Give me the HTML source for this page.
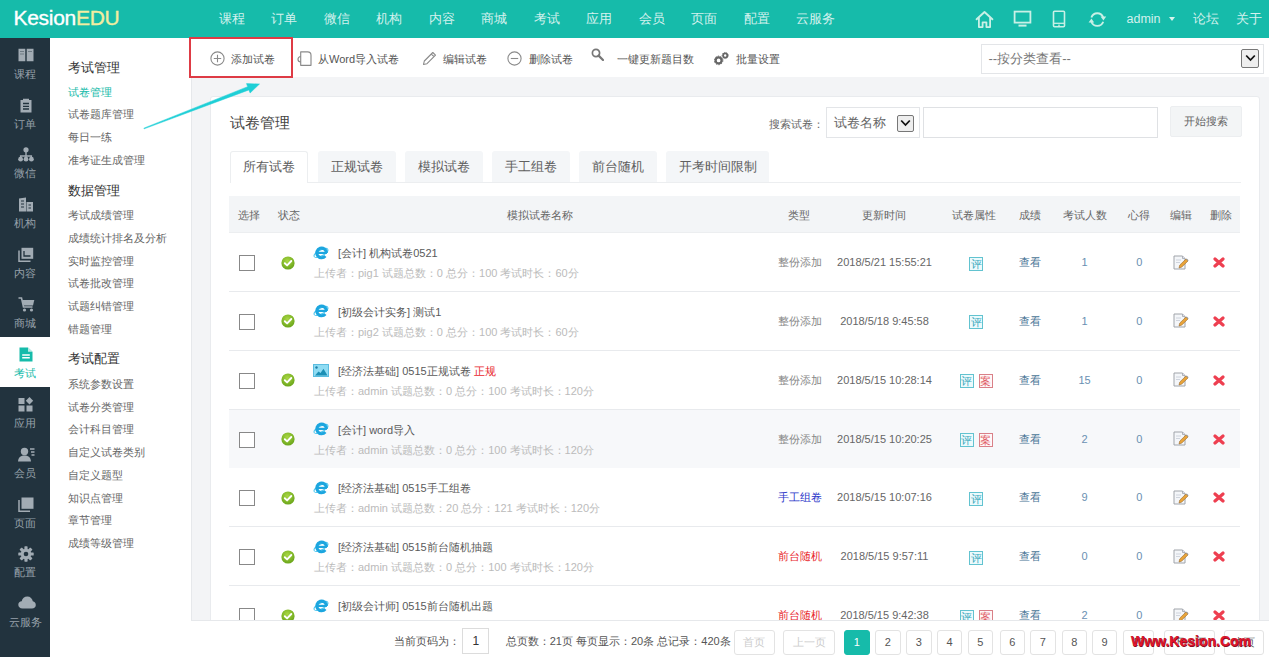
<!DOCTYPE html>
<html><head><meta charset="utf-8">
<style>
*{box-sizing:border-box;margin:0;padding:0}
html,body{width:1269px;height:657px;overflow:hidden}
body{position:relative;background:#f3f4f6;font-family:"Liberation Sans",sans-serif;color:#555}
.a{position:absolute;white-space:nowrap}
#top{left:0;top:0;width:1269px;height:38px;background:#16bbaa}
#logo{left:13.5px;top:3.5px;font-size:21px;line-height:28px;color:#fff;letter-spacing:-0.3px;-webkit-text-stroke:0.35px currentColor}
#logo span{color:#f3eda0}
.nav{top:10px;font-size:13px;line-height:18px;color:rgba(255,255,255,.82)}
#side{left:0;top:38px;width:50px;height:619px;background:#22333e}
.si{position:absolute;left:0;width:50px;height:50px}
.si svg{position:absolute;left:18px;top:10px}
.si b{position:absolute;left:0;width:50px;top:29px;text-align:center;font-weight:normal;font-size:11px;line-height:14px;color:#97a1aa}
.si.on{background:#fff}
.si.on b{color:#16bbaa}
#menu{left:50px;top:38px;width:142px;height:619px;background:#fff;border-right:1px solid #e6e8eb}
.mh{left:18px;font-size:13px;line-height:16px;color:#333}
.mi{left:18px;font-size:11px;line-height:14px;color:#666}
#tool{left:191px;top:38px;width:1078px;height:39px;background:#fff}
.tt{top:13.5px;font-size:11px;line-height:14px;color:#555}
#card{left:210px;top:96px;width:1050px;height:540px;background:#fff;border:1px solid #e9ebee;border-radius:3px}
.tab{position:absolute;top:54px;height:31px;background:#f4f6f8;font-size:13px;line-height:31px;text-align:center;color:#606060;border-radius:3px 3px 0 0}
.tab.on{background:#fff;border:1px solid #eceef0;border-bottom:none;height:32px;line-height:30px}
.th{top:208px;font-size:11px;line-height:14px;color:#666}
.row{position:absolute;left:229px;width:1011px;height:59px;border-bottom:1px solid #e8eaed}
.cb{position:absolute;left:10px;top:22px;width:16px;height:16px;border:1px solid #888;background:#fff}
.ok{position:absolute;left:51.5px;top:22.5px;width:14px;height:14px}
.ie{position:absolute;left:84px;top:12px}
.t1{position:absolute;left:109px;top:13px;font-size:11px;line-height:14px;color:#5a5a5a;white-space:nowrap}
.t2{position:absolute;left:85px;top:33px;font-size:11px;line-height:14px;color:#bbbbbb;white-space:nowrap}
.c{position:absolute;top:22px;font-size:11px;line-height:14px;text-align:center;white-space:nowrap}
#pager{left:191px;top:620px;width:1078px;height:37px;background:#fff;border-top:1px solid #e6e8eb}
.pb{position:absolute;top:9px;height:25px;border:1px solid #e3e3e3;border-radius:3px;font-size:11px;line-height:23px;text-align:center;color:#555;background:#fff}
</style></head><body>

<div id="top" class="a">
<div id="logo" class="a">Kesion<span>EDU</span></div>
<div class="a nav" style="left:218.9px">课程</div>
<div class="a nav" style="left:271.4px">订单</div>
<div class="a nav" style="left:323.9px">微信</div>
<div class="a nav" style="left:376.4px">机构</div>
<div class="a nav" style="left:428.9px">内容</div>
<div class="a nav" style="left:481.4px">商城</div>
<div class="a nav on" style="left:533.9px">考试</div>
<div class="a nav" style="left:586.4px">应用</div>
<div class="a nav" style="left:638.9px">会员</div>
<div class="a nav" style="left:691.4px">页面</div>
<div class="a nav" style="left:743.9px">配置</div>
<div class="a nav" style="left:796.4px">云服务</div>
<svg class="a" style="left:975px;top:10px" width="19" height="19" viewBox="0 0 19 19"><path d="M1.6 9.3 L9.5 2 L17.4 9.3" fill="none" stroke="#c9f0e6" stroke-width="1.9" stroke-linejoin="round" stroke-linecap="round"/><path d="M3.9 7.6 V17.1 H7.6 V12.3 H11.4 V17.1 H15.1 V7.6" fill="none" stroke="#c9f0e6" stroke-width="1.8" stroke-linejoin="round"/></svg>
<svg class="a" style="left:1013px;top:10px" width="19" height="18" viewBox="0 0 19 18"><rect x="1.6" y="1.6" width="15.8" height="11" fill="none" stroke="#c9f0e6" stroke-width="1.8"/><path d="M5.5 15.6 H13.5" stroke="#c9f0e6" stroke-width="2"/></svg>
<svg class="a" style="left:1052px;top:10px" width="14" height="18" viewBox="0 0 14 18"><rect x="1.5" y="1.2" width="11" height="15.6" rx="1" fill="none" stroke="#c9f0e6" stroke-width="1.6"/><path d="M1.5 13.3 H12.5" stroke="#c9f0e6" stroke-width="1.3"/><path d="M6 15.2 H8" stroke="#c9f0e6" stroke-width="1"/></svg>
<svg class="a" style="left:1086px;top:11px" width="23" height="18" viewBox="0 0 23 18"><path d="M5.38 6.45 A6.3 6.3 0 0 1 17.22 6.45" fill="none" stroke="#c9f0e6" stroke-width="1.9"/><path d="M17.22 10.75 A6.3 6.3 0 0 1 5.38 10.75" fill="none" stroke="#c9f0e6" stroke-width="1.9"/><path d="M14.6 5.6 L20.2 5.6 L17.4 9.6 Z" fill="#c9f0e6"/><path d="M2.6 11.6 L8.2 11.6 L5.4 7.6 Z" fill="#c9f0e6"/></svg>
<div class="a nav" style="left:1126.5px;top:10px;font-size:12.5px">admin</div>
<div class="a" style="left:1169px;top:17px;width:0;height:0;border-left:3.5px solid transparent;border-right:3.5px solid transparent;border-top:4px solid #d7f3ec"></div>
<div class="a nav" style="left:1193px">论坛</div>
<div class="a nav" style="left:1236px">关于</div>
</div>
<div id="side" class="a">
<div class="si" style="top:-0.30px"><svg width="16" height="14" viewBox="0 0 16 14"><path d="M0.5 0.8 H7.3 V13.2 H0.5 Z M8.7 0.8 H15.5 V13.2 H8.7 Z" fill="#a2acb4"/><path d="M2 3.5 H6 M2 6 H6 M10 3.5 H14" stroke="#22333e" stroke-width="0.8" opacity=".5"/></svg><b>课程</b></div>
<div class="si" style="top:49.57px"><svg width="16" height="15" viewBox="0 0 16 15"><path d="M2.5 2 H5 V0.8 H11 V2 H13.5 V14.5 H2.5 Z" fill="#a2acb4"/><path d="M5 5.5 H11 M5 8.3 H11 M5 11 H11" stroke="#22333e" stroke-width="1.3"/></svg><b>订单</b></div>
<div class="si" style="top:99.44px"><svg width="16" height="15" viewBox="0 0 16 15"><circle cx="8" cy="2.8" r="2.6" fill="#a2acb4"/><circle cx="2.6" cy="12.2" r="2.4" fill="#a2acb4"/><circle cx="8" cy="12.2" r="2.4" fill="#a2acb4"/><circle cx="13.4" cy="12.2" r="2.4" fill="#a2acb4"/><path d="M8 5 V12 M2.6 12 V9 H13.4 V12" fill="none" stroke="#a2acb4" stroke-width="1.4"/></svg><b>微信</b></div>
<div class="si" style="top:149.31px"><svg width="16" height="15" viewBox="0 0 16 15"><path d="M1 14.5 V1.5 L8 0.5 V14.5 Z M8.5 14.5 V5 H15 V14.5 Z" fill="#a2acb4"/><path d="M3 4 H6 M3 7 H6 M3 10 H6 M10.5 8 H13 M10.5 11 H13" stroke="#22333e" stroke-width="1.1"/></svg><b>机构</b></div>
<div class="si" style="top:199.18px"><svg width="16" height="15" viewBox="0 0 16 15"><path d="M1 3.5 V14.2 H12.5" fill="none" stroke="#a2acb4" stroke-width="1.5"/><rect x="3.5" y="0.8" width="11.7" height="11" fill="#a2acb4"/><path d="M6 4 V9 H12.5" fill="none" stroke="#22333e" stroke-width="1.3"/></svg><b>内容</b></div>
<div class="si" style="top:249.05px"><svg width="17" height="15" viewBox="0 0 17 15"><path d="M0.5 1 H3.5 L5.5 10 H14.5" fill="none" stroke="#a2acb4" stroke-width="1.6"/><path d="M4.2 3 H16.3 L15 8.6 H5.4 Z" fill="#a2acb4"/><circle cx="6.5" cy="13" r="1.6" fill="#a2acb4"/><circle cx="13.5" cy="13" r="1.6" fill="#a2acb4"/></svg><b>商城</b></div>
<div class="si on" style="top:298.92px"><svg width="14" height="15" viewBox="0 0 14 16" preserveAspectRatio="none" style="left:19px"><path d="M0.5 0.5 H9 L13.5 5 V15.5 H0.5 Z" fill="#16bbaa"/><path d="M9 0.5 V5 H13.5" fill="#fff" opacity=".7"/><path d="M3.2 8.5 H10.8 M3.2 11.5 H10.8" stroke="#fff" stroke-width="1.5"/></svg><b>考试</b></div>
<div class="si" style="top:348.79px"><svg width="16" height="15" viewBox="0 0 16 15"><rect x="0.5" y="1" width="6" height="6" fill="#a2acb4"/><rect x="0.5" y="8.5" width="6" height="6" fill="#a2acb4"/><rect x="8.5" y="8.5" width="6" height="6" fill="#a2acb4"/><path d="M11.5 0 L15.2 3.7 L11.5 7.4 L7.8 3.7 Z" fill="#a2acb4"/></svg><b>应用</b></div>
<div class="si" style="top:398.66px"><svg width="17" height="15" viewBox="0 0 17 15"><circle cx="6.5" cy="4.5" r="3.7" fill="#a2acb4"/><path d="M0 14.5 C0.5 9.8 3 8.6 6.5 8.6 C10 8.6 12.5 9.8 13 14.5 Z" fill="#a2acb4"/><path d="M12 2 H16.5 M13 5 H16.5 M13.5 8 H16.5" stroke="#a2acb4" stroke-width="1.4"/></svg><b>会员</b></div>
<div class="si" style="top:448.53px"><svg width="16" height="15" viewBox="0 0 16 15"><path d="M1 3 V14.2 H12" fill="none" stroke="#a2acb4" stroke-width="1.5"/><rect x="3.5" y="0.5" width="12" height="11.3" fill="#a2acb4"/></svg><b>页面</b></div>
<div class="si" style="top:498.40px"><svg width="16" height="16" viewBox="0 0 16 16"><g fill="#a2acb4"><circle cx="8" cy="8" r="5.2"/><rect x="6.4" y="0.3" width="3.2" height="15.4" rx="0.6"/><rect x="0.3" y="6.4" width="15.4" height="3.2" rx="0.6"/><rect x="6.4" y="0.3" width="3.2" height="15.4" rx="0.6" transform="rotate(45 8 8)"/><rect x="6.4" y="0.3" width="3.2" height="15.4" rx="0.6" transform="rotate(-45 8 8)"/></g><circle cx="8" cy="8" r="2.3" fill="#22333e"/></svg><b>配置</b></div>
<div class="si" style="top:548.27px"><svg width="18" height="13" viewBox="0 0 18 13"><path d="M4.5 12.5 C1.8 12.5 0.3 10.8 0.3 8.8 C0.3 6.8 1.8 5.4 3.7 5.3 C4.2 2.3 6.5 0.4 9.3 0.4 C12.3 0.4 14.4 2.5 14.8 5.3 C16.6 5.5 17.8 7 17.8 8.9 C17.8 10.9 16.3 12.5 14 12.5 Z" fill="#a2acb4"/></svg><b>云服务</b></div>
</div>
<div id="menu" class="a">
<div class="a mh" style="top:22.0px">考试管理</div>
<div class="a mi" style="top:46.5px;color:#16bbaa">试卷管理</div>
<div class="a mi" style="top:69.2px">试卷题库管理</div>
<div class="a mi" style="top:92.0px">每日一练</div>
<div class="a mi" style="top:114.7px">准考证生成管理</div>
<div class="a mh" style="top:144.5px">数据管理</div>
<div class="a mi" style="top:170.0px">考试成绩管理</div>
<div class="a mi" style="top:192.8px">成绩统计排名及分析</div>
<div class="a mi" style="top:215.5px">实时监控管理</div>
<div class="a mi" style="top:238.2px">试卷批改管理</div>
<div class="a mi" style="top:261.0px">试题纠错管理</div>
<div class="a mi" style="top:283.7px">错题管理</div>
<div class="a mh" style="top:313.0px">考试配置</div>
<div class="a mi" style="top:338.7px">系统参数设置</div>
<div class="a mi" style="top:361.5px">试卷分类管理</div>
<div class="a mi" style="top:384.2px">会计科目管理</div>
<div class="a mi" style="top:407.0px">自定义试卷类别</div>
<div class="a mi" style="top:429.7px">自定义题型</div>
<div class="a mi" style="top:452.5px">知识点管理</div>
<div class="a mi" style="top:475.2px">章节管理</div>
<div class="a mi" style="top:498.0px">成绩等级管理</div>
</div>
<div id="tool" class="a">
<svg class="a" style="left:18.5px;top:12.5px" width="15" height="15" viewBox="0 0 15 15"><circle cx="7.5" cy="7.5" r="6.6" fill="none" stroke="#8a8a8a" stroke-width="1.1"/><path d="M7.5 3.8 V11.2 M3.8 7.5 H11.2" stroke="#8a8a8a" stroke-width="1.1"/></svg>
<div class="a tt" style="left:40px">添加试卷</div>
<svg class="a" style="left:104.5px;top:12.5px" width="16" height="16" viewBox="0 0 16 16"><path d="M4.7 0.9 H11.6 Q15 0.9 15 4.3 V14.3 H4.7 Z" fill="none" stroke="#8a8a8a" stroke-width="1.15" stroke-linejoin="round"/><path d="M4.7 5.5 A2.7 2.7 0 0 0 4.7 10.9" fill="none" stroke="#8a8a8a" stroke-width="1.15"/></svg>
<div class="a tt" style="left:127px">从Word导入试卷</div>
<svg class="a" style="left:230.5px;top:12.5px" width="15" height="15" viewBox="0 0 15 15"><path d="M1.5 13.5 L2.3 10 L10.8 1.5 L13.5 4.2 L5 12.7 Z M9.3 3 L12 5.7" fill="none" stroke="#8a8a8a" stroke-width="1.1" stroke-linejoin="round"/></svg>
<div class="a tt" style="left:252px">编辑试卷</div>
<svg class="a" style="left:316px;top:12.5px" width="15" height="15" viewBox="0 0 15 15"><circle cx="7.5" cy="7.5" r="6.6" fill="none" stroke="#8a8a8a" stroke-width="1.1"/><path d="M3.8 7.5 H11.2" stroke="#8a8a8a" stroke-width="1.1"/></svg>
<div class="a tt" style="left:338px">删除试卷</div>
<svg class="a" style="left:400px;top:10px" width="13" height="13" viewBox="0 0 13 13"><circle cx="5" cy="5" r="3.6" fill="none" stroke="#777" stroke-width="1.7"/><path d="M7.6 7.6 L12 12" stroke="#777" stroke-width="2.2" stroke-linecap="round"/></svg>
<div class="a tt" style="left:425.5px">一键更新题目数</div>
<svg class="a" style="left:522.5px;top:13px" width="16" height="15" viewBox="0 0 16 15"><circle cx="4.6" cy="9.4" r="3" fill="none" stroke="#666" stroke-width="2.3"/><circle cx="4.6" cy="9.4" r="4.3" fill="none" stroke="#666" stroke-width="1" stroke-dasharray="1.4 1.3"/><circle cx="11.2" cy="4.5" r="2.1" fill="none" stroke="#666" stroke-width="1.8"/><circle cx="11.2" cy="4.5" r="3.1" fill="none" stroke="#666" stroke-width="0.8" stroke-dasharray="1.1 1.1"/></svg>
<div class="a tt" style="left:545px">批量设置</div>
<div class="a" style="left:790px;top:5.5px;width:283px;height:30px;border:1px solid #e3e5e8;background:#fff"></div>
<div class="a" style="left:797.5px;top:13px;font-size:13px;line-height:16px;color:#777">--按分类查看--</div>
<div class="a" style="left:1050px;top:11px;width:17.5px;height:18.5px;border:1px solid #777;background:#eee;border-radius:2px"></div>
<svg class="a" style="left:1053.5px;top:16px" width="11" height="8" viewBox="0 0 11 8"><path d="M1.2 1.5 L5.5 6 L9.8 1.5" fill="none" stroke="#111" stroke-width="1.8"/></svg>
</div>
<div class="a" style="left:189px;top:37px;width:104px;height:41px;border:2px solid #de3b45"></div>
<div id="card" class="a">
<div class="a" style="left:18.5px;top:17px;font-size:15px;line-height:18px;color:#444">试卷管理</div>
<div class="a" style="left:558px;top:20px;font-size:11px;line-height:14px;color:#666">搜索试卷：</div>
<div class="a" style="left:615px;top:9.5px;width:94px;height:31px;border:1px solid #e3e5e8;background:#fff"></div>
<div class="a" style="left:623px;top:18px;font-size:13px;line-height:16px;color:#666">试卷名称</div>
<div class="a" style="left:685.5px;top:17.5px;width:17.5px;height:17px;border:1px solid #777;background:#eee;border-radius:2px"></div>
<svg class="a" style="left:689px;top:22px" width="11" height="8" viewBox="0 0 11 8"><path d="M1.2 1.5 L5.5 6 L9.8 1.5" fill="none" stroke="#111" stroke-width="1.8"/></svg>
<div class="a" style="left:711.5px;top:9.5px;width:235px;height:31px;border:1px solid #dfe1e4;background:#fff"></div>
<div class="a" style="left:958.5px;top:8.5px;width:72px;height:31px;background:#f3f5f6;border:1px solid #eceef0;border-radius:2px;font-size:11px;line-height:29px;text-align:center;color:#666">开始搜索</div>
<div class="a" style="left:18.5px;top:85px;width:1011px;height:1px;background:#eceef0"></div>
<div class="tab on" style="left:18.5px;width:78px">所有试卷</div>
<div class="tab" style="left:106.5px;width:78px">正规试卷</div>
<div class="tab" style="left:193.5px;width:78px">模拟试卷</div>
<div class="tab" style="left:280.5px;width:78px">手工组卷</div>
<div class="tab" style="left:368.0px;width:78px">前台随机</div>
<div class="tab" style="left:455.0px;width:103px">开考时间限制</div>
</div>
<div class="a" style="left:229px;top:196px;width:1011px;height:37px;background:#f3f5f7;border-bottom:1px solid #eceef0"></div>
<div class="a th" style="left:199.0px;width:100px;text-align:center">选择</div>
<div class="a th" style="left:239.0px;width:100px;text-align:center">状态</div>
<div class="a th" style="left:490.0px;width:100px;text-align:center">模拟试卷名称</div>
<div class="a th" style="left:749.4px;width:100px;text-align:center">类型</div>
<div class="a th" style="left:834.0px;width:100px;text-align:center">更新时间</div>
<div class="a th" style="left:924.0px;width:100px;text-align:center">试卷属性</div>
<div class="a th" style="left:979.5px;width:100px;text-align:center">成绩</div>
<div class="a th" style="left:1034.5px;width:100px;text-align:center">考试人数</div>
<div class="a th" style="left:1089.3px;width:100px;text-align:center">心得</div>
<div class="a th" style="left:1130.7px;width:100px;text-align:center">编辑</div>
<div class="a th" style="left:1170.8px;width:100px;text-align:center">删除</div>
<div class="row" style="top:233.00px;background:#fff">
<div class="cb"></div>
<svg class="ok" width="14" height="14" viewBox="0 0 14 14"><defs><radialGradient id="g0" cx="45%" cy="35%" r="65%"><stop offset="0" stop-color="#a9d743"/><stop offset="1" stop-color="#6aa51a"/></radialGradient></defs><circle cx="7" cy="7" r="6.6" fill="url(#g0)"/><path d="M3.8 7.2 L6.1 9.4 L10.3 5" fill="none" stroke="#fff" stroke-width="1.9" stroke-linecap="round" stroke-linejoin="round"/></svg>
<svg class="ie" width="16" height="15" viewBox="0 0 16 15" style="top:11.5px"><ellipse cx="8" cy="8" rx="7.7" ry="2.9" transform="rotate(-28 8 8)" fill="none" stroke="#4cc6ee" stroke-width="1"/><path d="M13.4 7.9 A4.8 4.8 0 1 0 12.3 11" fill="none" stroke="#1ca6df" stroke-width="3.1"/><path d="M3.8 7.9 H13.9" stroke="#1ca6df" stroke-width="2.2"/></svg>
<div class="t1">[会计] 机构试卷0521</div>
<div class="t2">上传者：pig1 试题总数：0 总分：100 考试时长：60分</div>
<div class="c" style="left:511.0px;width:120px;color:#888">整份添加</div>
<div class="c" style="left:595.5px;width:120px;color:#666">2018/5/21 15:55:21</div>
<div class="c" style="left:687.0px;width:120px;top:23.5px;font-size:0;line-height:0"><span style="display:inline-block;width:14px;height:14px;border:1px solid #62c3d0;color:#3aa9bd;font-size:11px;line-height:12px;text-align:center;background:#ecfafc">评</span></div>
<div class="c" style="left:740.5px;width:120px;color:#4a7696">查看</div>
<div class="c" style="left:795.5px;width:120px;color:#6a90b2">1</div>
<div class="c" style="left:850.3px;width:120px;color:#6a90b2">0</div>
<div class="c" style="left:891.7px;width:120px;top:21.5px;line-height:0"><svg width="16" height="15" viewBox="0 0 16 15"><path d="M1 1 H9.5 L12 3.5 V14 H1 Z" fill="#f4f6f9" stroke="#a0a4aa" stroke-width="1"/><path d="M9.5 1 V3.5 H12" fill="#dde" stroke="#a0a4aa" stroke-width="0.8"/><path d="M3 5 H8 M3 7.5 H7" stroke="#c5ccd5" stroke-width="0.8"/><path d="M6 13 L6.8 10 L13 4 L15 6 L8.8 12 Z" fill="#e9a43a" stroke="#9a6a2a" stroke-width="0.6"/><path d="M13 4 L15 6 L15.6 5.2 L13.8 3.4 Z" fill="#999"/></svg></div>
<div class="c" style="left:929.5px;width:120px;top:24px;line-height:0"><svg width="12" height="11" viewBox="0 0 12 11"><path d="M2 2 L10 9 M10 2 L2 9" stroke="#ee3f50" stroke-width="3.2" stroke-linecap="round"/></svg></div>
</div>
<div class="row" style="top:291.85px;background:#fff">
<div class="cb"></div>
<svg class="ok" width="14" height="14" viewBox="0 0 14 14"><defs><radialGradient id="g1" cx="45%" cy="35%" r="65%"><stop offset="0" stop-color="#a9d743"/><stop offset="1" stop-color="#6aa51a"/></radialGradient></defs><circle cx="7" cy="7" r="6.6" fill="url(#g1)"/><path d="M3.8 7.2 L6.1 9.4 L10.3 5" fill="none" stroke="#fff" stroke-width="1.9" stroke-linecap="round" stroke-linejoin="round"/></svg>
<svg class="ie" width="16" height="15" viewBox="0 0 16 15" style="top:11.5px"><ellipse cx="8" cy="8" rx="7.7" ry="2.9" transform="rotate(-28 8 8)" fill="none" stroke="#4cc6ee" stroke-width="1"/><path d="M13.4 7.9 A4.8 4.8 0 1 0 12.3 11" fill="none" stroke="#1ca6df" stroke-width="3.1"/><path d="M3.8 7.9 H13.9" stroke="#1ca6df" stroke-width="2.2"/></svg>
<div class="t1">[初级会计实务] 测试1</div>
<div class="t2">上传者：pig2 试题总数：0 总分：100 考试时长：60分</div>
<div class="c" style="left:511.0px;width:120px;color:#888">整份添加</div>
<div class="c" style="left:595.5px;width:120px;color:#666">2018/5/18 9:45:58</div>
<div class="c" style="left:687.0px;width:120px;top:23.5px;font-size:0;line-height:0"><span style="display:inline-block;width:14px;height:14px;border:1px solid #62c3d0;color:#3aa9bd;font-size:11px;line-height:12px;text-align:center;background:#ecfafc">评</span></div>
<div class="c" style="left:740.5px;width:120px;color:#4a7696">查看</div>
<div class="c" style="left:795.5px;width:120px;color:#6a90b2">1</div>
<div class="c" style="left:850.3px;width:120px;color:#6a90b2">0</div>
<div class="c" style="left:891.7px;width:120px;top:21.5px;line-height:0"><svg width="16" height="15" viewBox="0 0 16 15"><path d="M1 1 H9.5 L12 3.5 V14 H1 Z" fill="#f4f6f9" stroke="#a0a4aa" stroke-width="1"/><path d="M9.5 1 V3.5 H12" fill="#dde" stroke="#a0a4aa" stroke-width="0.8"/><path d="M3 5 H8 M3 7.5 H7" stroke="#c5ccd5" stroke-width="0.8"/><path d="M6 13 L6.8 10 L13 4 L15 6 L8.8 12 Z" fill="#e9a43a" stroke="#9a6a2a" stroke-width="0.6"/><path d="M13 4 L15 6 L15.6 5.2 L13.8 3.4 Z" fill="#999"/></svg></div>
<div class="c" style="left:929.5px;width:120px;top:24px;line-height:0"><svg width="12" height="11" viewBox="0 0 12 11"><path d="M2 2 L10 9 M10 2 L2 9" stroke="#ee3f50" stroke-width="3.2" stroke-linecap="round"/></svg></div>
</div>
<div class="row" style="top:350.70px;background:#fff">
<div class="cb"></div>
<svg class="ok" width="14" height="14" viewBox="0 0 14 14"><defs><radialGradient id="g2" cx="45%" cy="35%" r="65%"><stop offset="0" stop-color="#a9d743"/><stop offset="1" stop-color="#6aa51a"/></radialGradient></defs><circle cx="7" cy="7" r="6.6" fill="url(#g2)"/><path d="M3.8 7.2 L6.1 9.4 L10.3 5" fill="none" stroke="#fff" stroke-width="1.9" stroke-linecap="round" stroke-linejoin="round"/></svg>
<svg class="ie" width="16" height="14" viewBox="0 0 16 14" style="top:13px"><rect x="0.5" y="0.5" width="15" height="12" fill="#8fdcf3" stroke="#5bbde0" stroke-width="1"/><circle cx="3.5" cy="3.5" r="1.2" fill="#1c7fa8"/><path d="M2 11.5 L5.5 7.5 L7.5 9 L10.5 4.8 L14.5 11.5 Z" fill="#1c8fb5"/></svg>
<div class="t1">[经济法基础] 0515正规试卷 <span style="color:#e8262c">正规</span></div>
<div class="t2">上传者：admin 试题总数：0 总分：100 考试时长：120分</div>
<div class="c" style="left:511.0px;width:120px;color:#888">整份添加</div>
<div class="c" style="left:595.5px;width:120px;color:#666">2018/5/15 10:28:14</div>
<div class="c" style="left:687.0px;width:120px;top:23.5px;font-size:0;line-height:0"><span style="display:inline-block;width:14px;height:14px;border:1px solid #62c3d0;color:#3aa9bd;font-size:11px;line-height:12px;text-align:center;background:#ecfafc">评</span><span style="display:inline-block;width:14px;height:14px;border:1px solid #d98088;color:#e06068;font-size:11px;line-height:12px;text-align:center;background:#fff8f8;margin-left:5px">案</span></div>
<div class="c" style="left:740.5px;width:120px;color:#4a7696">查看</div>
<div class="c" style="left:795.5px;width:120px;color:#6a90b2">15</div>
<div class="c" style="left:850.3px;width:120px;color:#6a90b2">0</div>
<div class="c" style="left:891.7px;width:120px;top:21.5px;line-height:0"><svg width="16" height="15" viewBox="0 0 16 15"><path d="M1 1 H9.5 L12 3.5 V14 H1 Z" fill="#f4f6f9" stroke="#a0a4aa" stroke-width="1"/><path d="M9.5 1 V3.5 H12" fill="#dde" stroke="#a0a4aa" stroke-width="0.8"/><path d="M3 5 H8 M3 7.5 H7" stroke="#c5ccd5" stroke-width="0.8"/><path d="M6 13 L6.8 10 L13 4 L15 6 L8.8 12 Z" fill="#e9a43a" stroke="#9a6a2a" stroke-width="0.6"/><path d="M13 4 L15 6 L15.6 5.2 L13.8 3.4 Z" fill="#999"/></svg></div>
<div class="c" style="left:929.5px;width:120px;top:24px;line-height:0"><svg width="12" height="11" viewBox="0 0 12 11"><path d="M2 2 L10 9 M10 2 L2 9" stroke="#ee3f50" stroke-width="3.2" stroke-linecap="round"/></svg></div>
</div>
<div class="row" style="top:409.55px;background:#f7f8fa">
<div class="cb"></div>
<svg class="ok" width="14" height="14" viewBox="0 0 14 14"><defs><radialGradient id="g3" cx="45%" cy="35%" r="65%"><stop offset="0" stop-color="#a9d743"/><stop offset="1" stop-color="#6aa51a"/></radialGradient></defs><circle cx="7" cy="7" r="6.6" fill="url(#g3)"/><path d="M3.8 7.2 L6.1 9.4 L10.3 5" fill="none" stroke="#fff" stroke-width="1.9" stroke-linecap="round" stroke-linejoin="round"/></svg>
<svg class="ie" width="16" height="15" viewBox="0 0 16 15" style="top:11.5px"><ellipse cx="8" cy="8" rx="7.7" ry="2.9" transform="rotate(-28 8 8)" fill="none" stroke="#4cc6ee" stroke-width="1"/><path d="M13.4 7.9 A4.8 4.8 0 1 0 12.3 11" fill="none" stroke="#1ca6df" stroke-width="3.1"/><path d="M3.8 7.9 H13.9" stroke="#1ca6df" stroke-width="2.2"/></svg>
<div class="t1">[会计] word导入</div>
<div class="t2">上传者：admin 试题总数：0 总分：100 考试时长：120分</div>
<div class="c" style="left:511.0px;width:120px;color:#888">整份添加</div>
<div class="c" style="left:595.5px;width:120px;color:#666">2018/5/15 10:20:25</div>
<div class="c" style="left:687.0px;width:120px;top:23.5px;font-size:0;line-height:0"><span style="display:inline-block;width:14px;height:14px;border:1px solid #62c3d0;color:#3aa9bd;font-size:11px;line-height:12px;text-align:center;background:#ecfafc">评</span><span style="display:inline-block;width:14px;height:14px;border:1px solid #d98088;color:#e06068;font-size:11px;line-height:12px;text-align:center;background:#fff8f8;margin-left:5px">案</span></div>
<div class="c" style="left:740.5px;width:120px;color:#4a7696">查看</div>
<div class="c" style="left:795.5px;width:120px;color:#6a90b2">2</div>
<div class="c" style="left:850.3px;width:120px;color:#6a90b2">0</div>
<div class="c" style="left:891.7px;width:120px;top:21.5px;line-height:0"><svg width="16" height="15" viewBox="0 0 16 15"><path d="M1 1 H9.5 L12 3.5 V14 H1 Z" fill="#f4f6f9" stroke="#a0a4aa" stroke-width="1"/><path d="M9.5 1 V3.5 H12" fill="#dde" stroke="#a0a4aa" stroke-width="0.8"/><path d="M3 5 H8 M3 7.5 H7" stroke="#c5ccd5" stroke-width="0.8"/><path d="M6 13 L6.8 10 L13 4 L15 6 L8.8 12 Z" fill="#e9a43a" stroke="#9a6a2a" stroke-width="0.6"/><path d="M13 4 L15 6 L15.6 5.2 L13.8 3.4 Z" fill="#999"/></svg></div>
<div class="c" style="left:929.5px;width:120px;top:24px;line-height:0"><svg width="12" height="11" viewBox="0 0 12 11"><path d="M2 2 L10 9 M10 2 L2 9" stroke="#ee3f50" stroke-width="3.2" stroke-linecap="round"/></svg></div>
</div>
<div class="row" style="top:468.40px;background:#fff">
<div class="cb"></div>
<svg class="ok" width="14" height="14" viewBox="0 0 14 14"><defs><radialGradient id="g4" cx="45%" cy="35%" r="65%"><stop offset="0" stop-color="#a9d743"/><stop offset="1" stop-color="#6aa51a"/></radialGradient></defs><circle cx="7" cy="7" r="6.6" fill="url(#g4)"/><path d="M3.8 7.2 L6.1 9.4 L10.3 5" fill="none" stroke="#fff" stroke-width="1.9" stroke-linecap="round" stroke-linejoin="round"/></svg>
<svg class="ie" width="16" height="15" viewBox="0 0 16 15" style="top:11.5px"><ellipse cx="8" cy="8" rx="7.7" ry="2.9" transform="rotate(-28 8 8)" fill="none" stroke="#4cc6ee" stroke-width="1"/><path d="M13.4 7.9 A4.8 4.8 0 1 0 12.3 11" fill="none" stroke="#1ca6df" stroke-width="3.1"/><path d="M3.8 7.9 H13.9" stroke="#1ca6df" stroke-width="2.2"/></svg>
<div class="t1">[经济法基础] 0515手工组卷</div>
<div class="t2">上传者：admin 试题总数：20 总分：121 考试时长：120分</div>
<div class="c" style="left:511.0px;width:120px;color:#2b35c9">手工组卷</div>
<div class="c" style="left:595.5px;width:120px;color:#666">2018/5/15 10:07:16</div>
<div class="c" style="left:687.0px;width:120px;top:23.5px;font-size:0;line-height:0"><span style="display:inline-block;width:14px;height:14px;border:1px solid #62c3d0;color:#3aa9bd;font-size:11px;line-height:12px;text-align:center;background:#ecfafc">评</span></div>
<div class="c" style="left:740.5px;width:120px;color:#4a7696">查看</div>
<div class="c" style="left:795.5px;width:120px;color:#6a90b2">9</div>
<div class="c" style="left:850.3px;width:120px;color:#6a90b2">0</div>
<div class="c" style="left:891.7px;width:120px;top:21.5px;line-height:0"><svg width="16" height="15" viewBox="0 0 16 15"><path d="M1 1 H9.5 L12 3.5 V14 H1 Z" fill="#f4f6f9" stroke="#a0a4aa" stroke-width="1"/><path d="M9.5 1 V3.5 H12" fill="#dde" stroke="#a0a4aa" stroke-width="0.8"/><path d="M3 5 H8 M3 7.5 H7" stroke="#c5ccd5" stroke-width="0.8"/><path d="M6 13 L6.8 10 L13 4 L15 6 L8.8 12 Z" fill="#e9a43a" stroke="#9a6a2a" stroke-width="0.6"/><path d="M13 4 L15 6 L15.6 5.2 L13.8 3.4 Z" fill="#999"/></svg></div>
<div class="c" style="left:929.5px;width:120px;top:24px;line-height:0"><svg width="12" height="11" viewBox="0 0 12 11"><path d="M2 2 L10 9 M10 2 L2 9" stroke="#ee3f50" stroke-width="3.2" stroke-linecap="round"/></svg></div>
</div>
<div class="row" style="top:527.25px;background:#fff">
<div class="cb"></div>
<svg class="ok" width="14" height="14" viewBox="0 0 14 14"><defs><radialGradient id="g5" cx="45%" cy="35%" r="65%"><stop offset="0" stop-color="#a9d743"/><stop offset="1" stop-color="#6aa51a"/></radialGradient></defs><circle cx="7" cy="7" r="6.6" fill="url(#g5)"/><path d="M3.8 7.2 L6.1 9.4 L10.3 5" fill="none" stroke="#fff" stroke-width="1.9" stroke-linecap="round" stroke-linejoin="round"/></svg>
<svg class="ie" width="16" height="15" viewBox="0 0 16 15" style="top:11.5px"><ellipse cx="8" cy="8" rx="7.7" ry="2.9" transform="rotate(-28 8 8)" fill="none" stroke="#4cc6ee" stroke-width="1"/><path d="M13.4 7.9 A4.8 4.8 0 1 0 12.3 11" fill="none" stroke="#1ca6df" stroke-width="3.1"/><path d="M3.8 7.9 H13.9" stroke="#1ca6df" stroke-width="2.2"/></svg>
<div class="t1">[经济法基础] 0515前台随机抽题</div>
<div class="t2">上传者：admin 试题总数：0 总分：100 考试时长：120分</div>
<div class="c" style="left:511.0px;width:120px;color:#e8262c">前台随机</div>
<div class="c" style="left:595.5px;width:120px;color:#666">2018/5/15 9:57:11</div>
<div class="c" style="left:687.0px;width:120px;top:23.5px;font-size:0;line-height:0"><span style="display:inline-block;width:14px;height:14px;border:1px solid #62c3d0;color:#3aa9bd;font-size:11px;line-height:12px;text-align:center;background:#ecfafc">评</span></div>
<div class="c" style="left:740.5px;width:120px;color:#4a7696">查看</div>
<div class="c" style="left:795.5px;width:120px;color:#6a90b2">0</div>
<div class="c" style="left:850.3px;width:120px;color:#6a90b2">0</div>
<div class="c" style="left:891.7px;width:120px;top:21.5px;line-height:0"><svg width="16" height="15" viewBox="0 0 16 15"><path d="M1 1 H9.5 L12 3.5 V14 H1 Z" fill="#f4f6f9" stroke="#a0a4aa" stroke-width="1"/><path d="M9.5 1 V3.5 H12" fill="#dde" stroke="#a0a4aa" stroke-width="0.8"/><path d="M3 5 H8 M3 7.5 H7" stroke="#c5ccd5" stroke-width="0.8"/><path d="M6 13 L6.8 10 L13 4 L15 6 L8.8 12 Z" fill="#e9a43a" stroke="#9a6a2a" stroke-width="0.6"/><path d="M13 4 L15 6 L15.6 5.2 L13.8 3.4 Z" fill="#999"/></svg></div>
<div class="c" style="left:929.5px;width:120px;top:24px;line-height:0"><svg width="12" height="11" viewBox="0 0 12 11"><path d="M2 2 L10 9 M10 2 L2 9" stroke="#ee3f50" stroke-width="3.2" stroke-linecap="round"/></svg></div>
</div>
<div class="row" style="top:586.10px;background:#fff">
<div class="cb"></div>
<svg class="ok" width="14" height="14" viewBox="0 0 14 14"><defs><radialGradient id="g6" cx="45%" cy="35%" r="65%"><stop offset="0" stop-color="#a9d743"/><stop offset="1" stop-color="#6aa51a"/></radialGradient></defs><circle cx="7" cy="7" r="6.6" fill="url(#g6)"/><path d="M3.8 7.2 L6.1 9.4 L10.3 5" fill="none" stroke="#fff" stroke-width="1.9" stroke-linecap="round" stroke-linejoin="round"/></svg>
<svg class="ie" width="16" height="15" viewBox="0 0 16 15" style="top:11.5px"><ellipse cx="8" cy="8" rx="7.7" ry="2.9" transform="rotate(-28 8 8)" fill="none" stroke="#4cc6ee" stroke-width="1"/><path d="M13.4 7.9 A4.8 4.8 0 1 0 12.3 11" fill="none" stroke="#1ca6df" stroke-width="3.1"/><path d="M3.8 7.9 H13.9" stroke="#1ca6df" stroke-width="2.2"/></svg>
<div class="t1">[初级会计师] 0515前台随机出题</div>
<div class="t2">上传者：admin 试题总数：0 总分：100 考试时长：120分</div>
<div class="c" style="left:511.0px;width:120px;color:#e8262c">前台随机</div>
<div class="c" style="left:595.5px;width:120px;color:#666">2018/5/15 9:42:38</div>
<div class="c" style="left:687.0px;width:120px;top:23.5px;font-size:0;line-height:0"><span style="display:inline-block;width:14px;height:14px;border:1px solid #62c3d0;color:#3aa9bd;font-size:11px;line-height:12px;text-align:center;background:#ecfafc">评</span><span style="display:inline-block;width:14px;height:14px;border:1px solid #d98088;color:#e06068;font-size:11px;line-height:12px;text-align:center;background:#fff8f8;margin-left:5px">案</span></div>
<div class="c" style="left:740.5px;width:120px;color:#4a7696">查看</div>
<div class="c" style="left:795.5px;width:120px;color:#6a90b2">2</div>
<div class="c" style="left:850.3px;width:120px;color:#6a90b2">0</div>
<div class="c" style="left:891.7px;width:120px;top:21.5px;line-height:0"><svg width="16" height="15" viewBox="0 0 16 15"><path d="M1 1 H9.5 L12 3.5 V14 H1 Z" fill="#f4f6f9" stroke="#a0a4aa" stroke-width="1"/><path d="M9.5 1 V3.5 H12" fill="#dde" stroke="#a0a4aa" stroke-width="0.8"/><path d="M3 5 H8 M3 7.5 H7" stroke="#c5ccd5" stroke-width="0.8"/><path d="M6 13 L6.8 10 L13 4 L15 6 L8.8 12 Z" fill="#e9a43a" stroke="#9a6a2a" stroke-width="0.6"/><path d="M13 4 L15 6 L15.6 5.2 L13.8 3.4 Z" fill="#999"/></svg></div>
<div class="c" style="left:929.5px;width:120px;top:24px;line-height:0"><svg width="12" height="11" viewBox="0 0 12 11"><path d="M2 2 L10 9 M10 2 L2 9" stroke="#ee3f50" stroke-width="3.2" stroke-linecap="round"/></svg></div>
</div>
<div id="pager" class="a">
<div class="a" style="left:202.5px;top:13px;font-size:11px;line-height:15px;color:#555">当前页码为：</div>
<div class="a" style="left:271.3px;top:6.5px;width:27px;height:26.5px;border:1px solid #dcdcdc;font-size:12px;line-height:25px;text-align:center;color:#333">1</div>
<div class="a" style="left:314.7px;top:13px;font-size:11px;line-height:15px;color:#555">总页数：21页 每页显示：20条 总记录：420条</div>
<div class="pb" style="left:542.7px;width:41.0px;color:#ccc">首页</div>
<div class="pb" style="left:592.3px;width:51.5px;color:#ccc">上一页</div>
<div class="pb" style="left:653.0px;width:25.5px;color:#fff;background:#16bbaa;border-color:#16bbaa">1</div>
<div class="pb" style="left:684.0px;width:25.5px;color:#555">2</div>
<div class="pb" style="left:715.0px;width:25.5px;color:#555">3</div>
<div class="pb" style="left:745.7px;width:25.5px;color:#555">4</div>
<div class="pb" style="left:776.6px;width:25.5px;color:#555">5</div>
<div class="pb" style="left:808.5px;width:25.5px;color:#555">6</div>
<div class="pb" style="left:839.0px;width:25.5px;color:#555">7</div>
<div class="pb" style="left:870.5px;width:25.5px;color:#555">8</div>
<div class="pb" style="left:900.8px;width:25.5px;color:#555">9</div>
<div class="pb" style="left:932.0px;width:31.0px;color:#555">10</div>
<div class="pb" style="left:972.7px;width:51.0px;color:#555">下一页</div>
<div class="pb" style="left:1032.5px;width:40.5px;color:#555">末页</div>
</div>
<div class="a" style="left:1131px;top:632px;font-size:14px;line-height:18px;font-weight:bold;color:#e8162e;-webkit-text-stroke:0.25px #a01020;text-shadow:0.7px 0.7px 0 #8a0c1c">Www.Kesion.Com</div>
<svg class="a" style="left:0;top:0" width="320" height="150" viewBox="0 0 320 150"><path d="M143.86 128.13 L247.67 86.67 L246.5 83.6 L259.5 84 L250.1 93 L248.93 89.93 L144.14 128.87 Z" fill="#1ecfd6" stroke="#1ecfd6" stroke-width="0.5" stroke-linejoin="round"/></svg>
</body></html>
